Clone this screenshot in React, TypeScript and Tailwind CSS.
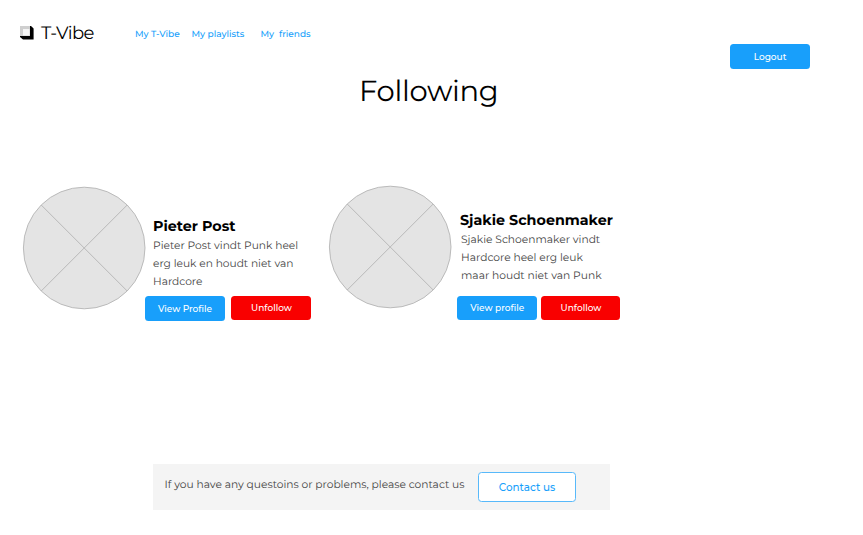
function Logo() {
  return (
    <svg className="mt-[25px] ml-[19px] h-4 w-4 shrink-0" viewBox="0 0 16 16">
      <path d="M10.5 1H12L14.6 3.6V14.6H4L1 12V10.5H10.5Z" fill="#000" />
      <rect x="1" y="1" width="10" height="10" fill="#cfcfcf" />
      <path d="M4 4H10.5V10.5H4Z" fill="#f5f5f5" />
    </svg>
  );
}

function Avatar({ className }: { className: string }) {
  return (
    <svg className={`h-[124px] w-[124px] shrink-0 ${className}`} viewBox="0 0 124 124">
      <circle cx="62.2" cy="62" r="60.8" fill="#e4e4e4" stroke="#b4b4b4" strokeWidth="0.9" />
      <path d="M19.2 19L105.2 105M105.2 19L19.2 105" stroke="#b4b4b4" strokeWidth="0.9" />
    </svg>
  );
}

const action =
  "flex h-[24.5px] shrink-0 items-center justify-center rounded-[3.5px] text-[9px] font-medium whitespace-pre text-white";

export default function App() {
  return (
    <div className="h-[535px] w-[863px] overflow-hidden bg-white font-['Montserrat','Inter',sans-serif] text-black [text-rendering:geometricPrecision]">
      <header className="flex h-[72px] items-start">
        <Logo />
        <div className="mt-[22px] ml-[6px] w-[94px] text-[18px] leading-[22px] tracking-[-0.6px] whitespace-nowrap">T-Vibe</div>
        <nav className="mt-[27.5px] flex text-[9px] leading-[13px] font-medium whitespace-pre text-[#189ffb]">
          <a className="w-[56.5px]">My T-Vibe</a>
          <a className="w-[69px]">My playlists</a>
          <a>My  friends</a>
        </nav>
        <button className="mt-[44px] mr-[53px] ml-auto flex h-[24.5px] w-[80px] items-center justify-center rounded-[3.5px] bg-[#189ffb] text-[9px] font-medium text-white">Logout</button>
      </header>

      <h1 className="h-[114px] pl-[359px] text-[29px] leading-[39px] tracking-[-0.3px]">Following</h1>

      <main className="flex h-[278px] items-start">
        <Avatar className="ml-[22px]" />
        <section className="w-[182px] pt-[30px]">
          <h2 className="pl-[7px] text-[14.3px] leading-5 font-bold whitespace-nowrap">Pieter Post</h2>
          <p className="mt-[0.7px] pl-[7px] text-[10.65px] leading-[18.3px] whitespace-nowrap text-[#444]">
            Pieter Post vindt Punk heel<br />
            erg leuk en houdt niet van<br />
            Hardcore
          </p>
          <div className="mt-[4.3px] -ml-px flex gap-[6px]">
            <button className={`${action} mt-[0.6px] w-[80px] bg-[#189ffb]`}>View Profile</button>
            <button className={`${action} w-[80px] bg-[#f90000] pl-px`}>Unfollow</button>
          </div>
        </section>

        <Avatar className="-mt-px" />
        <section className="w-[190px] pt-[24px]">
          <h2 className="pl-[8px] text-[14.3px] leading-5 font-bold whitespace-nowrap">Sjakie Schoenmaker</h2>
          <p className="mt-[0.5px] pl-[9px] text-[10.7px] leading-[18.3px] whitespace-nowrap text-[#444]">
            Sjakie Schoenmaker vindt<br />
            Hardcore heel erg leuk<br />
            maar houdt niet van Punk
          </p>
          <div className="mt-[10.5px] ml-[5px] flex gap-[4.5px]">
            <button className={`${action} w-[79.5px] bg-[#189ffb] pl-px`}>View profile</button>
            <button className={`${action} w-[79px] bg-[#f90000] pl-px`}>Unfollow</button>
          </div>
        </section>
      </main>

      <footer className="ml-[153px] flex h-[46px] w-[457px] items-start bg-[#f4f4f4]">
        <p className="mt-[12px] ml-[11.5px] w-[313.5px] text-[10.68px] leading-[18px] whitespace-nowrap text-[#444]">If you have any questoins or problems, please contact us</p>
        <button className="mt-[8px] flex h-[30px] w-[98px] items-center justify-center rounded-[3.5px] border border-[#58b9fa] bg-white pt-[2px] text-[10.4px] font-medium text-[#189ffb]">Contact us</button>
      </footer>
    </div>
  );
}
